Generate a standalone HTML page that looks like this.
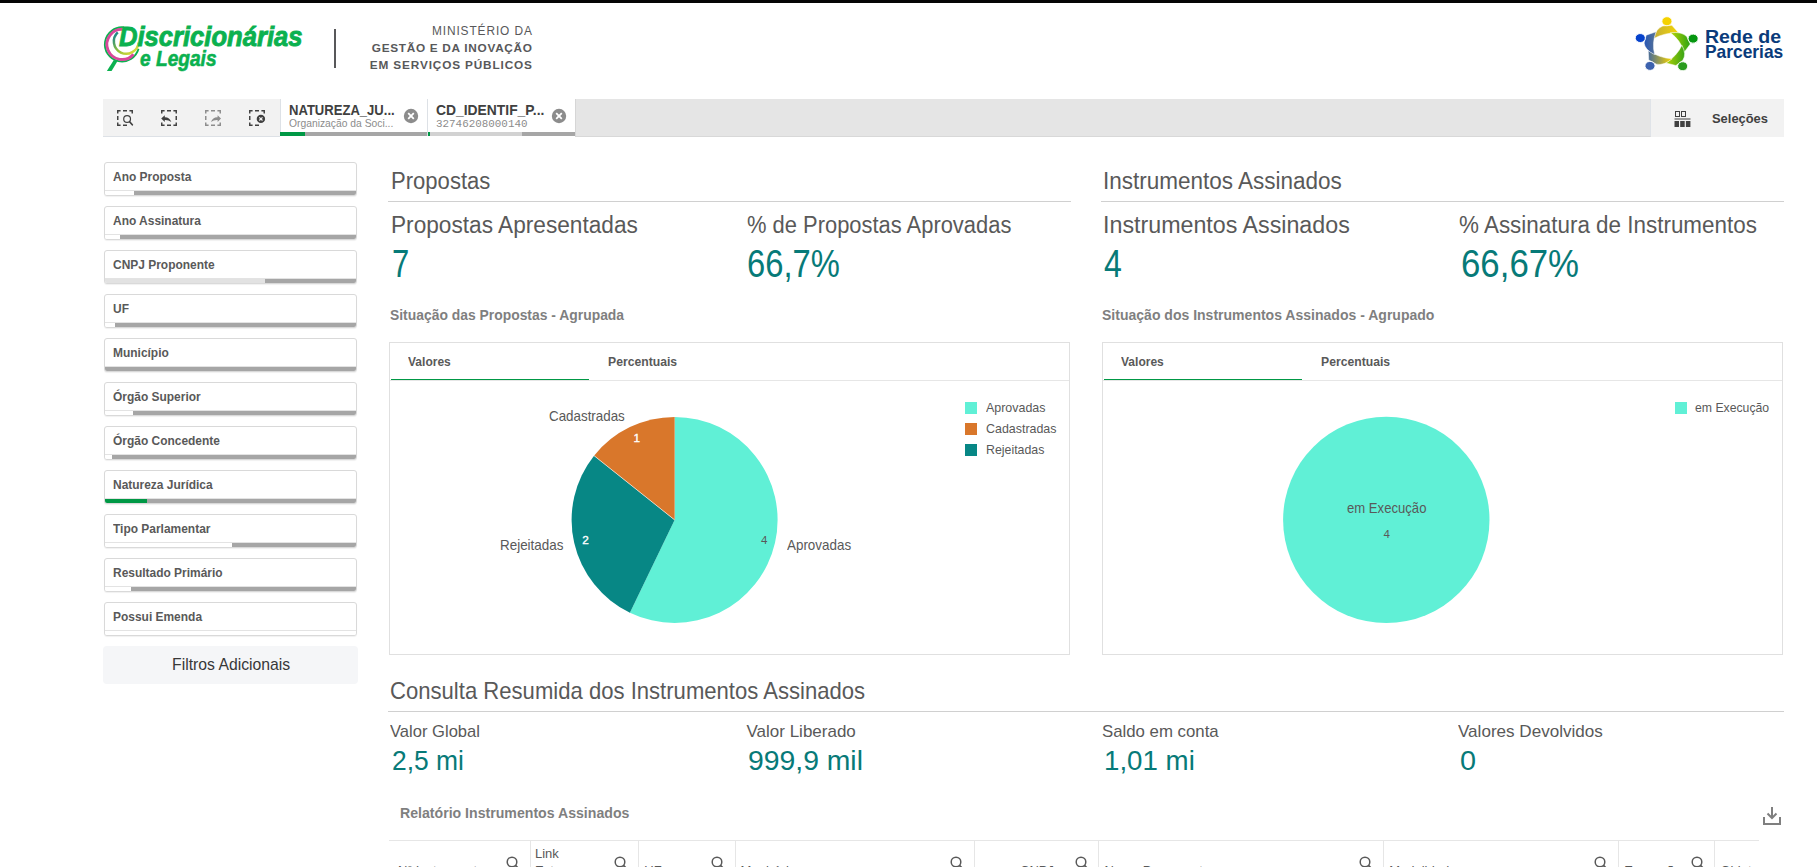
<!DOCTYPE html>
<html><head><meta charset="utf-8"><title>Discricionárias e Legais</title>
<style>
html,body{margin:0;padding:0;background:#fff;width:1817px;height:867px;overflow:hidden;position:relative}
.t{position:absolute;white-space:nowrap;line-height:1}
.r{position:absolute}
.fb{border:1px solid #d9d9d9;border-radius:3px;box-sizing:border-box;background:#fff;overflow:hidden;box-shadow:0 1px 1px rgba(0,0,0,0.06)}
.fb .bar{position:absolute;left:0;right:0;bottom:0;height:5px;border-top:1px solid #e3e3e3;box-sizing:border-box}
</style></head><body>
<div class="r" style="left:0px;top:0px;width:1817px;height:3px;background:#050505"></div>
<svg class="r" style="left:100px;top:20px" width="50" height="56" viewBox="0 0 50 56">
<defs><linearGradient id="gy" x1="0" y1="0" x2="1" y2="1"><stop offset="0" stop-color="#0a7f95"/><stop offset="0.5" stop-color="#8fbf3a"/><stop offset="1" stop-color="#f0e43a"/></linearGradient></defs>
<path d="M24 7.4 A17.1 17.1 0 1 0 38.5 28.8" fill="none" stroke="#0bb14f" stroke-width="1.9"/>
<path d="M23.5 9.4 A15.1 15.1 0 1 0 33.5 34.2" fill="none" stroke="#d9489b" stroke-width="2.9"/>
<path d="M17.8 12.3 A12.4 12.4 0 1 0 38.6 22.5" fill="none" stroke="url(#gy)" stroke-width="2.5"/>
<path d="M6.9 50.9 L11.6 50.9 L17.4 41.2 L13.8 39.9 Z" fill="#0bb14f"/>
</svg>
<div class="t" style="left:119.40px;top:23.35px;font-size:27.80px;font-family:'Liberation Sans', sans-serif;font-weight:bold;font-style:italic;color:#0bb14f;transform:scaleX(0.9206);transform-origin:0 0;-webkit-text-stroke:0.9px #0bb14f;">Discricionárias</div>
<div class="t" style="left:139.50px;top:49.29px;font-size:21.50px;font-family:'Liberation Sans', sans-serif;font-weight:bold;font-style:italic;color:#0bb14f;transform:scaleX(0.8895);transform-origin:0 0;-webkit-text-stroke:0.6px #0bb14f;">e Legais</div>
<div class="r" style="left:334px;top:29px;width:2px;height:39px;background:#58585a"></div>
<div class="t" style="left:431.90px;top:25.52px;font-size:11.90px;font-family:'Liberation Sans', sans-serif;font-weight:normal;font-style:normal;color:#58585a;letter-spacing:0.899px;">MINISTÉRIO DA</div>
<div class="t" style="left:371.80px;top:42.81px;font-size:11.80px;font-family:'Liberation Sans', sans-serif;font-weight:bold;font-style:normal;color:#58585a;letter-spacing:0.703px;">GESTÃO E DA INOVAÇÃO</div>
<div class="t" style="left:369.80px;top:60.01px;font-size:11.80px;font-family:'Liberation Sans', sans-serif;font-weight:bold;font-style:normal;color:#58585a;letter-spacing:0.851px;">EM SERVIÇOS PÚBLICOS</div>
<svg class="r" style="left:1630px;top:12px" width="75" height="64" viewBox="1630.0 12.0 75 64"><defs><linearGradient id="rp0" gradientUnits="userSpaceOnUse" x1="-12.00" y1="-14.00" x2="12.00" y2="-14.00"><stop offset="0" stop-color="#c2ae38"/><stop offset="1" stop-color="#f7d600"/></linearGradient><linearGradient id="rp1" gradientUnits="userSpaceOnUse" x1="-3.71" y1="-2.59" x2="3.71" y2="-25.41"><stop offset="0" stop-color="#c8d800"/><stop offset="1" stop-color="#089818"/></linearGradient><linearGradient id="rp2" gradientUnits="userSpaceOnUse" x1="9.71" y1="-6.95" x2="-9.71" y2="-21.05"><stop offset="0" stop-color="#c8d800"/><stop offset="1" stop-color="#1a9a1a"/></linearGradient><linearGradient id="rp3" gradientUnits="userSpaceOnUse" x1="9.71" y1="-21.05" x2="-9.71" y2="-6.95"><stop offset="0" stop-color="#2858b8"/><stop offset="1" stop-color="#f2d200"/></linearGradient><linearGradient id="rp4" gradientUnits="userSpaceOnUse" x1="-3.71" y1="-25.41" x2="3.71" y2="-2.59"><stop offset="0" stop-color="#0d48c8"/><stop offset="1" stop-color="#808a78"/></linearGradient></defs><g transform="translate(1666.6 46.0) scale(1.12 1)"><g transform="rotate(0)"><path d="M-3.4,-20 L4.7,-20.7 L10.6,-13.3 Q-1.95,-13.45 -11.5,-7.4 Q-9.75,-17.3 -3.4,-20 Z" fill="url(#rp0)" stroke="#fff" stroke-width="0.45"/><circle cx="0.3" cy="-24.8" r="4.5" fill="#f5d200" stroke="#fff" stroke-width="0.8"/></g><g transform="rotate(72)"><path d="M-3.4,-20 L4.7,-20.7 L10.6,-13.3 Q-1.95,-13.45 -11.5,-7.4 Q-9.75,-17.3 -3.4,-20 Z" fill="url(#rp1)" stroke="#fff" stroke-width="0.45"/><circle cx="0.3" cy="-24.8" r="4.5" fill="#05960f" stroke="#fff" stroke-width="0.8"/></g><g transform="rotate(144)"><path d="M-3.4,-20 L4.7,-20.7 L10.6,-13.3 Q-1.95,-13.45 -11.5,-7.4 Q-9.75,-17.3 -3.4,-20 Z" fill="url(#rp2)" stroke="#fff" stroke-width="0.45"/><circle cx="0.3" cy="-24.8" r="4.5" fill="#2a9c1e" stroke="#fff" stroke-width="0.8"/></g><g transform="rotate(216)"><path d="M-3.4,-20 L4.7,-20.7 L10.6,-13.3 Q-1.95,-13.45 -11.5,-7.4 Q-9.75,-17.3 -3.4,-20 Z" fill="url(#rp3)" stroke="#fff" stroke-width="0.45"/><circle cx="0.3" cy="-24.8" r="4.5" fill="#3c62ae" stroke="#fff" stroke-width="0.8"/></g><g transform="rotate(288)"><path d="M-3.4,-20 L4.7,-20.7 L10.6,-13.3 Q-1.95,-13.45 -11.5,-7.4 Q-9.75,-17.3 -3.4,-20 Z" fill="url(#rp4)" stroke="#fff" stroke-width="0.45"/><circle cx="0.3" cy="-24.8" r="4.5" fill="#0642cc" stroke="#fff" stroke-width="0.8"/></g></g></svg>
<div class="t" style="left:1704.70px;top:28.45px;font-size:18.60px;font-family:'Liberation Sans', sans-serif;font-weight:bold;font-style:normal;color:#0a3b7a;transform:scaleX(1.0518);transform-origin:0 0;">Rede de</div>
<div class="t" style="left:1704.70px;top:43.25px;font-size:18.60px;font-family:'Liberation Sans', sans-serif;font-weight:bold;font-style:normal;color:#0a3b7a;transform:scaleX(0.9344);transform-origin:0 0;">Parcerias</div>
<div class="r" style="left:103px;top:99px;width:177px;height:37px;background:#f2f2f2"></div>
<div class="r" style="left:103px;top:136px;width:177px;height:1px;background:#dde1e6"></div>
<svg class="r" style="left:117px;top:110px" width="17" height="17" viewBox="0 0 17 17">
<path d="M0.75,3.6 V0.75 H3.6 M6,0.75 H10 M12.4,0.75 H15.25 V3.6 M0.75,9.9 V6.1 M3.6,15.25 H0.75 V12.4 M10,15.25 H6" fill="none" stroke="#404040" stroke-width="1.45"/>
<circle cx="10.1" cy="9.05" r="3.4" fill="none" stroke="#404040" stroke-width="1.2"/><path d="M12.6 11.7 L15.3 14.8" stroke="#404040" stroke-width="1.7" stroke-linecap="round"/>
</svg>
<svg class="r" style="left:161px;top:110px" width="17" height="17" viewBox="0 0 17 17">
<path d="M0.75,3.6 V0.75 H3.6 M6,0.75 H10 M12.4,0.75 H15.25 V3.6 M15.25,6.1 V9.9 M15.25,12.4 V15.25 H12.4 M10,15.25 H6 M3.6,15.25 H0.75 V12.4" fill="none" stroke="#404040" stroke-width="1.45"/>
<path d="M0.2 8.5 L3.8 5.2 L3.8 7.2 Q8.6 7.1 10.3 11.9 Q7.6 9.7 3.8 9.9 L3.8 11.9 Z" fill="#404040"/>
</svg>
<svg class="r" style="left:205px;top:110px" width="17" height="17" viewBox="0 0 17 17">
<path d="M0.75,3.6 V0.75 H3.6 M6,0.75 H10 M12.4,0.75 H15.25 V3.6 M15.25,12.4 V15.25 H12.4 M10,15.25 H6 M3.6,15.25 H0.75 V12.4 M0.75,9.9 V6.1" fill="none" stroke="#8c8c8c" stroke-width="1.45"/>
<path d="M16 8.5 L12.6 5.2 L12.6 7.2 Q7.6 7.1 6 11.9 Q8.6 9.7 12.6 9.9 L12.6 11.9 Z" fill="#8c8c8c"/>
</svg>
<svg class="r" style="left:249px;top:110px" width="17" height="17" viewBox="0 0 17 17">
<path d="M0.75,3.6 V0.75 H3.6 M6,0.75 H10 M12.4,0.75 H15.25 V3.6 M0.75,9.9 V6.1 M3.6,15.25 H0.75 V12.4 M10,15.25 H6" fill="none" stroke="#404040" stroke-width="1.45"/>
<circle cx="11.9" cy="8.9" r="4.2" fill="#404040"/><path d="M10.3 7.3 L13.5 10.5 M13.5 7.3 L10.3 10.5" stroke="#f2f2f2" stroke-width="1.2"/>
</svg>
<div class="r" style="left:280px;top:99px;width:147px;height:37px;background:#fff;border-left:1px solid #dde1e6;box-sizing:border-box"></div>
<div class="r" style="left:280px;top:132px;width:25px;height:4px;background:#009845"></div>
<div class="r" style="left:305px;top:132px;width:122px;height:4px;background:#a6a6a6"></div>
<div class="t" style="left:288.60px;top:103.04px;font-size:14.00px;font-family:'Liberation Sans', sans-serif;font-weight:bold;font-style:normal;color:#404040;transform:scaleX(0.9327);transform-origin:0 0;">NATUREZA_JU...</div>
<div class="t" style="left:288.60px;top:118.86px;font-size:10.20px;font-family:'Liberation Sans', sans-serif;font-weight:normal;font-style:normal;color:#8c8c8c;transform:scaleX(1.0119);transform-origin:0 0;">Organização da Soci...</div>
<svg class="r" style="left:403px;top:108px" width="16" height="16" viewBox="0 0 16 16"><circle cx="8" cy="8" r="7.2" fill="#8c8c8c"/><path d="M5.2 5.2 L10.8 10.8 M10.8 5.2 L5.2 10.8" stroke="#fff" stroke-width="1.8"/></svg>
<div class="r" style="left:427px;top:99px;width:148px;height:37px;background:#fff;border-left:1px solid #dde1e6;box-sizing:border-box"></div>
<div class="r" style="left:428px;top:132px;width:2px;height:4px;background:#009845"></div>
<div class="r" style="left:430px;top:132px;width:92px;height:4px;background:#d2d2d2"></div>
<div class="r" style="left:522px;top:132px;width:53px;height:4px;background:#a6a6a6"></div>
<div class="t" style="left:436.40px;top:103.04px;font-size:14.00px;font-family:'Liberation Sans', sans-serif;font-weight:bold;font-style:normal;color:#404040;transform:scaleX(0.9899);transform-origin:0 0;">CD_IDENTIF_P...</div>
<div class="t" style="left:436.40px;top:118.61px;font-size:10.50px;font-family:'Liberation Mono', monospace;font-weight:normal;font-style:normal;color:#8c8c8c;transform:scaleX(1.0374);transform-origin:0 0;">32746208000140</div>
<svg class="r" style="left:551px;top:108px" width="16" height="16" viewBox="0 0 16 16"><circle cx="8" cy="8" r="7.2" fill="#8c8c8c"/><path d="M5.2 5.2 L10.8 10.8 M10.8 5.2 L5.2 10.8" stroke="#fff" stroke-width="1.8"/></svg>
<div class="r" style="left:575px;top:99px;width:1074px;height:37px;background:#e5e5e5;border-left:1px solid #d6d6d6;border-right:1px solid #dfe3e8;border-bottom:1px solid #d8d8d8;box-sizing:content-box"></div>
<div class="r" style="left:1651px;top:99px;width:133px;height:38px;background:#f2f2f2"></div>
<svg class="r" style="left:1674px;top:111px" width="18" height="17" viewBox="0 0 18 17"><rect x="1.5" y="0.5" width="4" height="5" fill="none" stroke="#404040" stroke-width="1"/><rect x="7.5" y="0.5" width="4" height="5" fill="none" stroke="#404040" stroke-width="1"/><rect x="0.5" y="7.5" width="16" height="1" fill="#404040"/><rect x="0.5" y="10" width="4.5" height="6" fill="#404040"/><rect x="6.2" y="10" width="4.5" height="6" fill="#404040"/><rect x="11.9" y="10" width="4.5" height="6" fill="#404040"/></svg>
<div class="t" style="left:1712.00px;top:112.25px;font-size:13.40px;font-family:'Liberation Sans', sans-serif;font-weight:bold;font-style:normal;color:#404040;transform:scaleX(0.9640);transform-origin:0 0;">Seleções</div>
<div class="r fb" style="left:104px;top:162px;width:253px;height:34px"><div class="bar" style="background:linear-gradient(90deg,#fff 0,#fff 29px,#a6a6a6 29px)"></div></div>
<div class="t" style="left:113.40px;top:171.26px;font-size:12.80px;font-family:'Liberation Sans', sans-serif;font-weight:bold;font-style:normal;color:#595959;transform:scaleX(0.9342);transform-origin:0 0;">Ano Proposta</div>
<div class="r fb" style="left:104px;top:206px;width:253px;height:34px"><div class="bar" style="background:linear-gradient(90deg,#fff 0,#fff 15px,#a6a6a6 15px)"></div></div>
<div class="t" style="left:113.40px;top:215.26px;font-size:12.80px;font-family:'Liberation Sans', sans-serif;font-weight:bold;font-style:normal;color:#595959;transform:scaleX(0.9342);transform-origin:0 0;">Ano Assinatura</div>
<div class="r fb" style="left:104px;top:250px;width:253px;height:34px"><div class="bar" style="background:linear-gradient(90deg,#e2e2e2 0,#e2e2e2 160px,#a6a6a6 160px)"></div></div>
<div class="t" style="left:113.40px;top:259.26px;font-size:12.80px;font-family:'Liberation Sans', sans-serif;font-weight:bold;font-style:normal;color:#595959;transform:scaleX(0.9342);transform-origin:0 0;">CNPJ Proponente</div>
<div class="r fb" style="left:104px;top:294px;width:253px;height:34px"><div class="bar" style="background:linear-gradient(90deg,#fff 0,#fff 10px,#a6a6a6 10px)"></div></div>
<div class="t" style="left:113.40px;top:303.26px;font-size:12.80px;font-family:'Liberation Sans', sans-serif;font-weight:bold;font-style:normal;color:#595959;transform:scaleX(0.9342);transform-origin:0 0;">UF</div>
<div class="r fb" style="left:104px;top:338px;width:253px;height:34px"><div class="bar" style="background:linear-gradient(90deg,#fff 0,#fff 0px,#a6a6a6 0px)"></div></div>
<div class="t" style="left:113.40px;top:347.26px;font-size:12.80px;font-family:'Liberation Sans', sans-serif;font-weight:bold;font-style:normal;color:#595959;transform:scaleX(0.9342);transform-origin:0 0;">Município</div>
<div class="r fb" style="left:104px;top:382px;width:253px;height:34px"><div class="bar" style="background:linear-gradient(90deg,#fff 0,#fff 28px,#a6a6a6 28px)"></div></div>
<div class="t" style="left:113.40px;top:391.26px;font-size:12.80px;font-family:'Liberation Sans', sans-serif;font-weight:bold;font-style:normal;color:#595959;transform:scaleX(0.9342);transform-origin:0 0;">Órgão Superior</div>
<div class="r fb" style="left:104px;top:426px;width:253px;height:34px"><div class="bar" style="background:linear-gradient(90deg,#fff 0,#fff 7px,#a6a6a6 7px)"></div></div>
<div class="t" style="left:113.40px;top:435.26px;font-size:12.80px;font-family:'Liberation Sans', sans-serif;font-weight:bold;font-style:normal;color:#595959;transform:scaleX(0.9342);transform-origin:0 0;">Órgão Concedente</div>
<div class="r fb" style="left:104px;top:470px;width:253px;height:34px"><div class="bar" style="background:linear-gradient(90deg,#009845 0,#009845 42px,#a6a6a6 42px)"></div></div>
<div class="t" style="left:113.40px;top:479.26px;font-size:12.80px;font-family:'Liberation Sans', sans-serif;font-weight:bold;font-style:normal;color:#595959;transform:scaleX(0.9342);transform-origin:0 0;">Natureza Jurídica</div>
<div class="r fb" style="left:104px;top:514px;width:253px;height:34px"><div class="bar" style="background:linear-gradient(90deg,#fff 0,#fff 127px,#a6a6a6 127px)"></div></div>
<div class="t" style="left:113.40px;top:523.26px;font-size:12.80px;font-family:'Liberation Sans', sans-serif;font-weight:bold;font-style:normal;color:#595959;transform:scaleX(0.9342);transform-origin:0 0;">Tipo Parlamentar</div>
<div class="r fb" style="left:104px;top:558px;width:253px;height:34px"><div class="bar" style="background:linear-gradient(90deg,#fff 0,#fff 26px,#a6a6a6 26px)"></div></div>
<div class="t" style="left:113.40px;top:567.26px;font-size:12.80px;font-family:'Liberation Sans', sans-serif;font-weight:bold;font-style:normal;color:#595959;transform:scaleX(0.9342);transform-origin:0 0;">Resultado Primário</div>
<div class="r fb" style="left:104px;top:602px;width:253px;height:34px"><div class="bar" style="background:linear-gradient(90deg,#fff 0,#fff 253px,#a6a6a6 253px)"></div></div>
<div class="t" style="left:113.40px;top:611.26px;font-size:12.80px;font-family:'Liberation Sans', sans-serif;font-weight:bold;font-style:normal;color:#595959;transform:scaleX(0.9342);transform-origin:0 0;">Possui Emenda</div>
<div class="r" style="left:103px;top:646px;width:255px;height:38px;background:#f5f6f8;border-radius:4px"></div>
<div class="t" style="left:171.90px;top:656.84px;font-size:16.60px;font-family:'Liberation Sans', sans-serif;font-weight:normal;font-style:normal;color:#383838;transform:scaleX(0.9496);transform-origin:0 0;">Filtros Adicionais</div>
<div class="t" style="left:390.80px;top:169.72px;font-size:23.00px;font-family:'Liberation Sans', sans-serif;font-weight:normal;font-style:normal;color:#595959;transform:scaleX(0.9593);transform-origin:0 0;">Propostas</div>
<div class="r" style="left:388px;top:201px;width:683px;height:1px;background:#d0d0d0"></div>
<div class="t" style="left:1102.50px;top:169.82px;font-size:23.00px;font-family:'Liberation Sans', sans-serif;font-weight:normal;font-style:normal;color:#595959;transform:scaleX(0.9781);transform-origin:0 0;">Instrumentos Assinados</div>
<div class="r" style="left:1101px;top:201px;width:683px;height:1px;background:#d0d0d0"></div>
<div class="t" style="left:390.80px;top:214.20px;font-size:23.50px;font-family:'Liberation Sans', sans-serif;font-weight:normal;font-style:normal;color:#595959;transform:scaleX(0.9639);transform-origin:0 0;">Propostas Apresentadas</div>
<div class="t" style="left:746.60px;top:214.20px;font-size:23.50px;font-family:'Liberation Sans', sans-serif;font-weight:normal;font-style:normal;color:#595959;transform:scaleX(0.9325);transform-origin:0 0;">% de Propostas Aprovadas</div>
<div class="t" style="left:1102.50px;top:214.20px;font-size:23.50px;font-family:'Liberation Sans', sans-serif;font-weight:normal;font-style:normal;color:#595959;transform:scaleX(0.9890);transform-origin:0 0;">Instrumentos Assinados</div>
<div class="t" style="left:1459.40px;top:214.20px;font-size:23.50px;font-family:'Liberation Sans', sans-serif;font-weight:normal;font-style:normal;color:#595959;transform:scaleX(0.9542);transform-origin:0 0;">% Assinatura de Instrumentos</div>
<div class="t" style="left:392.00px;top:244.81px;font-size:38.00px;font-family:'Liberation Sans', sans-serif;font-weight:normal;font-style:normal;color:#077a78;transform:scaleX(0.8156);transform-origin:0 0;">7</div>
<div class="t" style="left:747.40px;top:244.81px;font-size:38.00px;font-family:'Liberation Sans', sans-serif;font-weight:normal;font-style:normal;color:#077a78;transform:scaleX(0.8614);transform-origin:0 0;">66,7%</div>
<div class="t" style="left:1103.90px;top:244.81px;font-size:38.00px;font-family:'Liberation Sans', sans-serif;font-weight:normal;font-style:normal;color:#077a78;transform:scaleX(0.8440);transform-origin:0 0;">4</div>
<div class="t" style="left:1460.70px;top:244.81px;font-size:38.00px;font-family:'Liberation Sans', sans-serif;font-weight:normal;font-style:normal;color:#077a78;transform:scaleX(0.9160);transform-origin:0 0;">66,67%</div>
<div class="t" style="left:389.70px;top:306.60px;font-size:15.00px;font-family:'Liberation Sans', sans-serif;font-weight:bold;font-style:normal;color:#7f7f7f;transform:scaleX(0.9258);transform-origin:0 0;">Situação das Propostas - Agrupada</div>
<div class="t" style="left:1102.30px;top:306.60px;font-size:15.00px;font-family:'Liberation Sans', sans-serif;font-weight:bold;font-style:normal;color:#7f7f7f;transform:scaleX(0.9348);transform-origin:0 0;">Situação dos Instrumentos Assinados - Agrupado</div>
<div class="r" style="left:389px;top:342px;width:681px;height:313px;border:1px solid #e0e0e0;box-sizing:border-box;background:#fff"></div>
<div class="r" style="left:390px;top:380px;width:679px;height:1px;background:#e6e6e6"></div>
<div class="r" style="left:391px;top:378.9px;width:198px;height:1.6px;background:#009845"></div>
<div class="t" style="left:407.60px;top:355.96px;font-size:12.80px;font-family:'Liberation Sans', sans-serif;font-weight:bold;font-style:normal;color:#595959;transform:scaleX(0.9393);transform-origin:0 0;">Valores</div>
<div class="t" style="left:607.70px;top:355.96px;font-size:12.80px;font-family:'Liberation Sans', sans-serif;font-weight:bold;font-style:normal;color:#595959;transform:scaleX(0.9521);transform-origin:0 0;">Percentuais</div>
<div class="r" style="left:1102px;top:342px;width:681px;height:313px;border:1px solid #e0e0e0;box-sizing:border-box;background:#fff"></div>
<div class="r" style="left:1103px;top:380px;width:679px;height:1px;background:#e6e6e6"></div>
<div class="r" style="left:1104px;top:378.9px;width:198px;height:1.6px;background:#009845"></div>
<div class="t" style="left:1120.60px;top:355.96px;font-size:12.80px;font-family:'Liberation Sans', sans-serif;font-weight:bold;font-style:normal;color:#595959;transform:scaleX(0.9393);transform-origin:0 0;">Valores</div>
<div class="t" style="left:1320.70px;top:355.96px;font-size:12.80px;font-family:'Liberation Sans', sans-serif;font-weight:bold;font-style:normal;color:#595959;transform:scaleX(0.9521);transform-origin:0 0;">Percentuais</div>
<svg class="r" style="left:0;top:0" width="1817" height="867"><path d="M674.60 519.90 L674.60 416.90 A103.00 103.00 0 1 1 629.91 612.70 Z" fill="#60f0d6"/><path d="M674.60 519.90 L629.91 612.70 A103.00 103.00 0 0 1 594.07 455.68 Z" fill="#078785"/><path d="M674.60 519.90 L594.07 455.68 A103.00 103.00 0 0 1 674.60 416.90 Z" fill="#d9772b"/><line x1="674.60" y1="519.90" x2="594.07" y2="455.68" stroke="#fff" stroke-width="0.6"/><circle cx="1386.3" cy="519.9" r="103.2" fill="#60f0d6"/></svg>
<div class="t" style="left:549.00px;top:409.42px;font-size:14.50px;font-family:'Liberation Sans', sans-serif;font-weight:normal;font-style:normal;color:#595959;transform:scaleX(0.9220);transform-origin:0 0;">Cadastradas</div>
<div class="t" style="left:500.00px;top:537.52px;font-size:14.50px;font-family:'Liberation Sans', sans-serif;font-weight:normal;font-style:normal;color:#595959;transform:scaleX(0.9254);transform-origin:0 0;">Rejeitadas</div>
<div class="t" style="left:786.50px;top:537.52px;font-size:14.50px;font-family:'Liberation Sans', sans-serif;font-weight:normal;font-style:normal;color:#595959;transform:scaleX(0.9248);transform-origin:0 0;">Aprovadas</div>
<div class="t" style="left:633.50px;top:433.31px;font-size:11.80px;font-family:'Liberation Sans', sans-serif;font-weight:normal;font-style:normal;color:#ffffff;-webkit-text-stroke:0.35px #fff;">1</div>
<div class="t" style="left:582.20px;top:534.61px;font-size:11.80px;font-family:'Liberation Sans', sans-serif;font-weight:normal;font-style:normal;color:#ffffff;-webkit-text-stroke:0.35px #fff;">2</div>
<div class="t" style="left:761.00px;top:535.06px;font-size:11.50px;font-family:'Liberation Sans', sans-serif;font-weight:normal;font-style:normal;color:#595959;">4</div>
<div class="r" style="left:965px;top:402px;width:12px;height:12px;background:#60f0d6"></div>
<div class="t" style="left:985.50px;top:401.23px;font-size:13.30px;font-family:'Liberation Sans', sans-serif;font-weight:normal;font-style:normal;color:#595959;transform:scaleX(0.9359);transform-origin:0 0;">Aprovadas</div>
<div class="r" style="left:965px;top:423px;width:12px;height:12px;background:#d9772b"></div>
<div class="t" style="left:985.50px;top:422.23px;font-size:13.30px;font-family:'Liberation Sans', sans-serif;font-weight:normal;font-style:normal;color:#595959;transform:scaleX(0.9349);transform-origin:0 0;">Cadastradas</div>
<div class="r" style="left:965px;top:444px;width:12px;height:12px;background:#078785"></div>
<div class="t" style="left:985.50px;top:443.23px;font-size:13.30px;font-family:'Liberation Sans', sans-serif;font-weight:normal;font-style:normal;color:#595959;transform:scaleX(0.9293);transform-origin:0 0;">Rejeitadas</div>
<div class="t" style="left:1346.50px;top:501.17px;font-size:14.20px;font-family:'Liberation Sans', sans-serif;font-weight:normal;font-style:normal;color:#595959;transform:scaleX(0.9239);transform-origin:0 0;">em Execução</div>
<div class="t" style="left:1383.61px;top:529.26px;font-size:11.50px;font-family:'Liberation Sans', sans-serif;font-weight:normal;font-style:normal;color:#595959;">4</div>
<div class="r" style="left:1675px;top:402px;width:12px;height:12px;background:#60f0d6"></div>
<div class="t" style="left:1695.00px;top:401.23px;font-size:13.30px;font-family:'Liberation Sans', sans-serif;font-weight:normal;font-style:normal;color:#595959;transform:scaleX(0.9206);transform-origin:0 0;">em Execução</div>
<div class="t" style="left:390.00px;top:679.55px;font-size:23.20px;font-family:'Liberation Sans', sans-serif;font-weight:normal;font-style:normal;color:#595959;transform:scaleX(0.9526);transform-origin:0 0;">Consulta Resumida dos Instrumentos Assinados</div>
<div class="r" style="left:388px;top:711px;width:1396px;height:1px;background:#d0d0d0"></div>
<div class="t" style="left:390.40px;top:723.00px;font-size:17.00px;font-family:'Liberation Sans', sans-serif;font-weight:normal;font-style:normal;color:#595959;transform:scaleX(0.9750);transform-origin:0 0;">Valor Global</div>
<div class="t" style="left:391.90px;top:746.51px;font-size:27.50px;font-family:'Liberation Sans', sans-serif;font-weight:normal;font-style:normal;color:#077a78;transform:scaleX(0.9608);transform-origin:0 0;">2,5 mi</div>
<div class="t" style="left:746.50px;top:723.00px;font-size:17.00px;font-family:'Liberation Sans', sans-serif;font-weight:normal;font-style:normal;color:#595959;">Valor Liberado</div>
<div class="t" style="left:748.00px;top:746.51px;font-size:27.50px;font-family:'Liberation Sans', sans-serif;font-weight:normal;font-style:normal;color:#077a78;transform:scaleX(1.0300);transform-origin:0 0;">999,9 mil</div>
<div class="t" style="left:1102.00px;top:723.00px;font-size:17.00px;font-family:'Liberation Sans', sans-serif;font-weight:normal;font-style:normal;color:#595959;transform:scaleX(0.9879);transform-origin:0 0;">Saldo em conta</div>
<div class="t" style="left:1103.50px;top:746.51px;font-size:27.50px;font-family:'Liberation Sans', sans-serif;font-weight:normal;font-style:normal;color:#077a78;transform:scaleX(1.0067);transform-origin:0 0;">1,01 mi</div>
<div class="t" style="left:1458.20px;top:723.00px;font-size:17.00px;font-family:'Liberation Sans', sans-serif;font-weight:normal;font-style:normal;color:#595959;transform:scaleX(1.0038);transform-origin:0 0;">Valores Devolvidos</div>
<div class="t" style="left:1459.70px;top:746.51px;font-size:27.50px;font-family:'Liberation Sans', sans-serif;font-weight:normal;font-style:normal;color:#077a78;transform:scaleX(1.0483);transform-origin:0 0;">0</div>
<div class="t" style="left:399.60px;top:804.59px;font-size:15.00px;font-family:'Liberation Sans', sans-serif;font-weight:bold;font-style:normal;color:#7f7f7f;transform:scaleX(0.9414);transform-origin:0 0;">Relatório Instrumentos Assinados</div>
<svg class="r" style="left:1762px;top:806px" width="20" height="20" viewBox="0 0 20 20"><path d="M10 1 L10 12 M5.5 7.5 L10 12 L14.5 7.5" fill="none" stroke="#7f7f7f" stroke-width="2"/><path d="M2 11 L2 18 L18 18 L18 11" fill="none" stroke="#7f7f7f" stroke-width="2"/></svg>
<div class="r" style="left:389px;top:840px;width:1370px;height:1px;background:#e6e6e6"></div>
<div class="r" style="left:530px;top:841px;width:1px;height:26px;background:#e6e6e6"></div>
<div class="r" style="left:638px;top:841px;width:1px;height:26px;background:#e6e6e6"></div>
<div class="r" style="left:735px;top:841px;width:1px;height:26px;background:#e6e6e6"></div>
<div class="r" style="left:974px;top:841px;width:1px;height:26px;background:#e6e6e6"></div>
<div class="r" style="left:1098px;top:841px;width:1px;height:26px;background:#e6e6e6"></div>
<div class="r" style="left:1383px;top:841px;width:1px;height:26px;background:#e6e6e6"></div>
<div class="r" style="left:1618px;top:841px;width:1px;height:26px;background:#e6e6e6"></div>
<div class="r" style="left:1714px;top:841px;width:1px;height:26px;background:#e6e6e6"></div>
<div class="t" style="left:398.00px;top:863.99px;font-size:13.00px;font-family:'Liberation Sans', sans-serif;font-weight:normal;font-style:normal;color:#595959;">Nº Instrumento</div>
<svg class="r" style="left:505.5px;top:856px" width="14" height="14" viewBox="0 0 14 14"><circle cx="6" cy="6" r="4.8" fill="none" stroke="#595959" stroke-width="1.5"/><path d="M9.4 9.4 L12.5 12.5" stroke="#595959" stroke-width="1.8"/></svg>
<div class="t" style="left:535.00px;top:847.09px;font-size:13.00px;font-family:'Liberation Sans', sans-serif;font-weight:normal;font-style:normal;color:#595959;">Link</div>
<div class="t" style="left:535.00px;top:863.99px;font-size:13.00px;font-family:'Liberation Sans', sans-serif;font-weight:normal;font-style:normal;color:#595959;">Externo</div>
<svg class="r" style="left:614.3px;top:856px" width="14" height="14" viewBox="0 0 14 14"><circle cx="6" cy="6" r="4.8" fill="none" stroke="#595959" stroke-width="1.5"/><path d="M9.4 9.4 L12.5 12.5" stroke="#595959" stroke-width="1.8"/></svg>
<div class="t" style="left:644.30px;top:863.99px;font-size:13.00px;font-family:'Liberation Sans', sans-serif;font-weight:normal;font-style:normal;color:#595959;">UF</div>
<svg class="r" style="left:710.6px;top:856px" width="14" height="14" viewBox="0 0 14 14"><circle cx="6" cy="6" r="4.8" fill="none" stroke="#595959" stroke-width="1.5"/><path d="M9.4 9.4 L12.5 12.5" stroke="#595959" stroke-width="1.8"/></svg>
<div class="t" style="left:740.60px;top:863.99px;font-size:13.00px;font-family:'Liberation Sans', sans-serif;font-weight:normal;font-style:normal;color:#595959;">Município</div>
<svg class="r" style="left:950.3px;top:856px" width="14" height="14" viewBox="0 0 14 14"><circle cx="6" cy="6" r="4.8" fill="none" stroke="#595959" stroke-width="1.5"/><path d="M9.4 9.4 L12.5 12.5" stroke="#595959" stroke-width="1.8"/></svg>
<div class="t" style="left:1020.07px;top:863.99px;font-size:13.00px;font-family:'Liberation Sans', sans-serif;font-weight:normal;font-style:normal;color:#595959;">CNPJ</div>
<svg class="r" style="left:1074.5px;top:856px" width="14" height="14" viewBox="0 0 14 14"><circle cx="6" cy="6" r="4.8" fill="none" stroke="#595959" stroke-width="1.5"/><path d="M9.4 9.4 L12.5 12.5" stroke="#595959" stroke-width="1.8"/></svg>
<div class="t" style="left:1104.50px;top:863.99px;font-size:13.00px;font-family:'Liberation Sans', sans-serif;font-weight:normal;font-style:normal;color:#595959;">Nome Proponente</div>
<svg class="r" style="left:1359.2px;top:856px" width="14" height="14" viewBox="0 0 14 14"><circle cx="6" cy="6" r="4.8" fill="none" stroke="#595959" stroke-width="1.5"/><path d="M9.4 9.4 L12.5 12.5" stroke="#595959" stroke-width="1.8"/></svg>
<div class="t" style="left:1389.20px;top:863.99px;font-size:13.00px;font-family:'Liberation Sans', sans-serif;font-weight:normal;font-style:normal;color:#595959;">Modalidade</div>
<svg class="r" style="left:1594.3px;top:856px" width="14" height="14" viewBox="0 0 14 14"><circle cx="6" cy="6" r="4.8" fill="none" stroke="#595959" stroke-width="1.5"/><path d="M9.4 9.4 L12.5 12.5" stroke="#595959" stroke-width="1.8"/></svg>
<div class="t" style="left:1624.30px;top:863.99px;font-size:13.00px;font-family:'Liberation Sans', sans-serif;font-weight:normal;font-style:normal;color:#595959;">Execução</div>
<svg class="r" style="left:1690.5px;top:856px" width="14" height="14" viewBox="0 0 14 14"><circle cx="6" cy="6" r="4.8" fill="none" stroke="#595959" stroke-width="1.5"/><path d="M9.4 9.4 L12.5 12.5" stroke="#595959" stroke-width="1.8"/></svg>
<div class="t" style="left:1720.50px;top:863.99px;font-size:13.00px;font-family:'Liberation Sans', sans-serif;font-weight:normal;font-style:normal;color:#595959;">Objeto</div>
</body></html>
